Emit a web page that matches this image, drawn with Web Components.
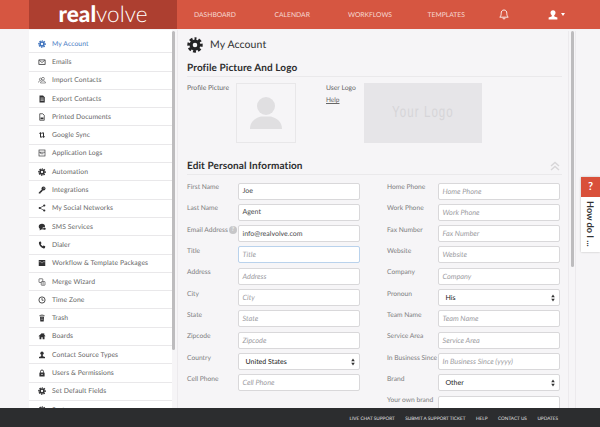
<!DOCTYPE html>
<html>
<head>
<meta charset="utf-8">
<title>My Account</title>
<style>
  html, body { margin: 0; height: 100%; overflow: hidden; background: #f6f5f7; }
  body { font-family: Lato, "Open Sans", sans-serif; color: #555; text-rendering: geometricPrecision; }
</style>
</head>
<body>
<rv-app>
  <rv-header slot="header"></rv-header>
  <rv-sidebar slot="sidebar"></rv-sidebar>
  <rv-account slot="main"></rv-account>
  <rv-footer slot="footer"></rv-footer>
</rv-app>
<rv-help-tab></rv-help-tab>

<script>
// Iconos del menú, todos en una caja de 16x16.
const GEAR = '<circle cx="8" cy="8" r="3.9" fill="none" stroke="currentColor" stroke-width="3.2"/><circle cx="8" cy="8" r="6.300" fill="none" stroke="currentColor" stroke-width="2.800" stroke-dasharray="2.950 2" stroke-dashoffset="1.475" transform="rotate(-90 8 8)"/>';
const ICONS = {
  gear: GEAR,
  mail: '<rect x="1" y="3" width="14" height="10.5" rx="1" fill="currentColor"/><rect x="2.6" y="4.6" width="10.8" height="7.3" fill="#fff"/><path d="M2.6 4.8 8 9l5.4-4.2" fill="none" stroke="currentColor" stroke-width="1.4"/>',
  users: '<g fill="none" stroke="currentColor" stroke-width="1"><circle cx="10" cy="5.5" r="2.8"/><path d="M5 14c0-3 2-4.2 5-4.2s5 1.2 5 4.2z"/><circle cx="5" cy="6.5" r="2.2"/><path d="M1 13c0-2.4 1.4-3.4 3.6-3.4"/></g>',
  exportDoc: '<path d="M3 1h7l3.5 3.5V15H3z" fill="currentColor"/><path d="M5 6h6.5M5 8.500h6.500M5 11h6.500" stroke="#fff" stroke-width="1.100"/>',
  printDoc: '<path d="M3.500 1.500h6l3 3v10h-9z" fill="none" stroke="currentColor" stroke-width="1.500"/><path d="M5 9h6v3.500H5z" fill="currentColor"/>',
  sync: '<path d="M4 13V5.500H1.800L4.800 2l3 3.500H6V11h2.500v2zM12 3v7.500h2.200l-3 3.500-3-3.500H10V5H7.500V3z" fill="currentColor"/>',
  logs: '<rect x="2" y="2" width="12" height="12" fill="none" stroke="currentColor" stroke-width="1.300"/><path d="M2 6.500h12M6 9.500h5M5 6.500v3" fill="none" stroke="currentColor" stroke-width="1.200"/>',
  key: '<circle cx="11" cy="5" r="4" fill="currentColor"/><circle cx="12" cy="4" r="1" fill="#fff"/><path d="M8.500 6 1.500 13v2h3l1-1.200V12.500h1.500l3-4z" fill="currentColor"/>',
  share: '<path d="M12.500 3 3.500 8l9 5" fill="none" stroke="currentColor" stroke-width="1.300"/><circle cx="12.500" cy="3" r="2.200" fill="currentColor"/><circle cx="3.500" cy="8" r="2.200" fill="currentColor"/><circle cx="12.500" cy="13" r="2.200" fill="currentColor"/>',
  sms: '<path d="M8 1.500c3.700 0 6 2.200 6 4.800 0 .7-.2 1.400-.5 2H9.500v4.500H6.200L3.500 15V11.200C2 10.200 1.500 8.300 1.500 6.300 1.500 3.700 4.300 1.500 8 1.500z" fill="currentColor"/><rect x="10.500" y="9.500" width="4.500" height="4" rx="1" fill="currentColor"/>',
  phone: '<path d="M3 1.500 5.500 1l1.500 3.500-1.500 1.500c.6 1.700 2.300 3.600 4 4.300L11 8.800l3.500 1.700-.5 2.800c-.3 1-1.300 1.700-2.500 1.500C6.700 14 2.300 9.400 1.800 4.500 1.700 3 2 2 3 1.500z" fill="currentColor"/>',
  box: '<rect x="1.500" y="2" width="13" height="12" fill="currentColor"/><path d="M1.500 5.500h4.500l1 2h2l1-2h4.500" fill="none" stroke="#fff" stroke-width=".8"/>',
  merge: '<rect x="2" y="1.500" width="7.500" height="7.500" rx="1" fill="none" stroke="currentColor" stroke-width="1.200"/><rect x="6.500" y="7" width="7.500" height="7.500" rx="1" fill="#fff" stroke="currentColor" stroke-width="1.200"/><path d="M8.500 9.500h3.500M8.500 12h3.500" stroke="currentColor"/>',
  clock: '<circle cx="8" cy="8" r="6.200" fill="none" stroke="currentColor" stroke-width="1.700"/><path d="M8 4.200V8.500H11.200" fill="none" stroke="currentColor" stroke-width="1.500"/>',
  trash: '<path d="M3 2.500h10v2H3z" fill="currentColor"/><path d="M4 5.500h8l-.6 9.500H4.600z" fill="currentColor"/><path d="M5.500 1h5v1.500h-5zM5.500 8h5M5.500 11h5" fill="currentColor" stroke="#fff" stroke-width=".7"/>',
  home: '<path d="M8 2 .8 8.500h2.200V14.500h3.700V10.500h2.600v4h3.700V8.500h2.200L12.500 5.600V2.500h-2v1.400z" fill="currentColor"/>',
  contact: '<circle cx="8" cy="4.500" r="3.300" fill="currentColor"/><path d="M6.500 7h3l.3 3.500 4.200 1.500v2.500H2V12l4.200-1.500z" fill="currentColor"/>',
  lock: '<path d="M5 7.500V5a3 3 0 0 1 6 0v2.500" fill="none" stroke="currentColor" stroke-width="1.800"/><rect x="2.800" y="7" width="10.400" height="8" rx="1" fill="currentColor"/><circle cx="8" cy="10.800" r="1.200" fill="#fff"/>'
};
const svgIcon = (name, size) => `<svg width="${size}" height="${size}" viewBox="0 0 16 16" aria-hidden="true">${ICONS[name]}</svg>`;

// Marco de la página: cabecera, menú, contenido y pie.
class RvApp extends HTMLElement {
  constructor() {
    super();
    this.attachShadow({ mode: 'open' });
    this.shadowRoot.innerHTML = `
      <style>
        :host { display: flex; flex-direction: column; height: 427px; overflow: hidden; }
        .body { flex: 1; min-height: 0; display: flex; padding-left: 29px; overflow: hidden; }
      </style>
      <slot name="header"></slot>
      <div class="body">
        <slot name="sidebar"></slot>
        <slot name="main"></slot>
      </div>
      <slot name="footer"></slot>`;
  }
}

class RvHeader extends HTMLElement {
  constructor() {
    super();
    this.attachShadow({ mode: 'open' });
    this.shadowRoot.innerHTML = `
      <style>
        :host { display: flex; height: 29px; background: #d65641; color: #f7d9d3; border-bottom: 1px solid #f3f2f4; font-family: Lato, sans-serif; }
        .logo { width: 148px; margin-left: 29px; background: #ad3f30; color: #fff; font-size: 22.500px; line-height: 28px; text-align: center; box-sizing: border-box; }
        .logo b { font-weight: 900; }
        .logo span { font-weight: 300; }
        nav { display: flex; align-items: center; font-size: 6.750px; padding-left: 17px; }
        a { display: block; }
        a:nth-child(1) { width: 80.500px; }
        a:nth-child(2) { width: 73.500px; }
        a:nth-child(3) { width: 79.500px; }
        a:nth-child(4) { width: 71.500px; }
        svg { display: block; color: #fff; }
        .bell { width: 49px; }
        .user { display: flex; align-items: center; gap: 3px; }
        .caret { width: 0; height: 0; border: 2.500px solid transparent; border-top: 3px solid #fff; border-bottom: 0; }
      </style>
      <div class="logo"><b>real</b><span>volve</span></div>
      <nav>
        <a>DASHBOARD</a><a>CALENDAR</a><a>WORKFLOWS</a><a>TEMPLATES</a>
        <div class="bell"><svg width="10" height="11" viewBox="0 0 10 11"><path d="M5 1c-2 0-2.800 1.500-2.800 3.300 0 2-.6 3-1.400 3.900h8.400c-.8-.9-1.400-1.900-1.400-3.900C7.800 2.500 7 1 5 1zM3.800 9c.1 1.300 2.300 1.300 2.400 0" fill="none" stroke="currentColor" stroke-width=".9"/></svg></div>
        <div class="user">
          <svg width="10" height="10" viewBox="0 0 16 16"><circle cx="8" cy="4.500" r="4" fill="currentColor"/><path d="M6.200 7h3.600l.4 3.500 4.800 1.600V15H1v-2.900l4.800-1.600z" fill="currentColor"/></svg>
          <span class="caret"></span>
        </div>
      </nav>`;
  }
}

// Una fila del menú lateral.
class RvNavItem extends HTMLElement {
  constructor() {
    super();
    this.attachShadow({ mode: 'open' });
  }
  connectedCallback() {
    const icon = this.getAttribute('icon');
    const active = this.hasAttribute('active');
    this.shadowRoot.innerHTML = `
      <style>
        :host { display: flex; align-items: center; box-sizing: border-box; height: 18.300px; padding-left: 9px; background: #fff; border-bottom: 1px solid #e9e8ea; color: ${active ? '#4a7cc4' : '#666'}; font-size: 6.800px; letter-spacing: .08px; flex: none; }
        svg { flex: none; color: ${active ? '#3f73bd' : '#303032'}; margin-right: 6px; display: block; }
      </style>
      ${svgIcon(icon, 8)}<slot></slot>`;
  }
}
customElements.define('rv-nav-item', RvNavItem);

class RvSidebar extends HTMLElement {
  constructor() {
    super();
    this.attachShadow({ mode: 'open' });
    const items = [
      ['gear', 'My Account'], ['mail', 'Emails'], ['users', 'Import Contacts'], ['exportDoc', 'Export Contacts'],
      ['printDoc', 'Printed Documents'], ['sync', 'Google Sync'], ['logs', 'Application Logs'], ['gear', 'Automation'],
      ['key', 'Integrations'], ['share', 'My Social Networks'], ['sms', 'SMS Services'], ['phone', 'Dialer'],
      ['box', 'Workflow & Template Packages'], ['merge', 'Merge Wizard'], ['clock', 'Time Zone'], ['trash', 'Trash'],
      ['home', 'Boards'], ['contact', 'Contact Source Types'], ['lock', 'Users & Permissions'], ['gear', 'Set Default Fields'],
      ['gear', 'System']
    ];
    const rows = items.map(([icon, text], i) =>
      `<rv-nav-item icon="${icon}"${i === 0 ? ' active' : ''}>${text.replace('&', '&amp;')}</rv-nav-item>`).join('');
    this.shadowRoot.innerHTML = `
      <style>
        :host { display: flex; flex: none; width: 149px; height: 100%; overflow: hidden; border-right: 1px solid #eceaed; box-sizing: border-box; }
        .list { width: 143px; padding-top: 5px; background: #fff; display: flex; flex-direction: column; overflow: hidden; }
        .track { width: 5px; background: #f6f5f7; }
        .thumb { width: 3px; height: 319px; margin: 1px 0 0 0; border-radius: 2px; background: #bdbcbe; }
      </style>
      <div class="list">${rows}</div>
      <div class="track"><div class="thumb"></div></div>`;
  }
}

// Etiqueta más caja de texto o desplegable.
class RvField extends HTMLElement {
  constructor() {
    super();
    this.attachShadow({ mode: 'open' });
  }
  connectedCallback() {
    const label = this.getAttribute('label');
    const value = this.getAttribute('value');
    const ph = this.getAttribute('placeholder') ?? label;
    const select = this.hasAttribute('select');
    const focus = this.hasAttribute('focus');
    const info = this.hasAttribute('info');
    this.shadowRoot.innerHTML = `
      <style>
        :host { display: flex; height: 21.330px; font-size: 6.700px; color: #7d7d80; }
        .label { width: 51px; flex: none; padding-top: .5px; white-space: nowrap; box-sizing: border-box; display: flex; gap: 1px; }
        .info { width: 8px; height: 8px; border-radius: 50%; background: #c6c6c8; color: #fff; font-size: 6px; line-height: 8px; text-align: center; }
        .box { width: 122px; height: 17px; box-sizing: border-box; background: #fff; border: 1px solid #d9d8da; border-bottom-width: 1.500px; border-radius: 2px; padding-left: 3.500px; padding-right: 4px; display: flex; align-items: center; justify-content: space-between; overflow: hidden; white-space: nowrap; font-size: 7px; }
        .box.focus { border: 1px solid #b9d2ec; }
        .ph { color: #9c9c9f; font-style: italic; font-size: 7.300px; }
        .val { color: #4a4a4c; }
        .sel { color: #222; padding-left: 3px; }
        .arrows { display: block; flex: none; }
      </style>
      <div class="label">${label}${info ? '<span class="info">?</span>' : ''}</div>
      <div class="box${focus ? ' focus' : ''}">
        ${select
          ? `<span class="sel">${value}</span><svg class="arrows" width="4" height="8" viewBox="0 0 4 8"><path d="M2 .5 3.800 3.300H.2zM2 7.500 .2 4.700h3.600z" fill="#333"/></svg>`
          : value ? `<span class="val">${value}</span>` : `<span class="ph">${ph}</span>`}
      </div>`;
  }
}
customElements.define('rv-field', RvField);

class RvAccount extends HTMLElement {
  constructor() {
    super();
    this.attachShadow({ mode: 'open' });
    this.shadowRoot.innerHTML = `
      <style>
        :host { display: flex; flex: 1; min-width: 0; height: 100%; overflow: hidden; font-family: Lato, sans-serif; }
        .content { width: 390px; flex: none; padding: 7px 6px 0 9px; box-sizing: border-box; }
        .title { display: flex; align-items: center; gap: 7px; height: 16px; font-size: 10.500px; color: #333; letter-spacing: .1px; }
        .title svg { color: #232325; display: block; }
        h2 { margin: 0; font-size: 10px; font-weight: 700; color: #2d2d2f; letter-spacing: .1px; line-height: 13px; height: 14px; border-bottom: 1px solid #eae9eb; position: relative; }
        .h1 { margin-top: 9px; }
        .pics { display: flex; height: 61px; margin-top: 6px; font-size: 6.800px; color: #666; }
        .pl { width: 49px; flex: none; padding-top: 1px; }
        .pic { width: 60px; height: 60px; box-sizing: border-box; border: 1px solid #e8e7e9; background: #f6f5f7; display: flex; align-items: center; justify-content: center; flex: none; }
        .pic svg { display: block; color: #e0dfe1; }
        .ul { margin-left: 30px; width: 38px; flex: none; padding-top: 1px; }
        .ul u { display: block; margin-top: 5px; font-size: 6.500px; }
        .logo { width: 118px; height: 60px; background: #e6e5e8; color: #d6d5d8; display: flex; align-items: center; justify-content: center; font-size: 16px; letter-spacing: 1.500px; font-family: "Liberation Sans", sans-serif; }
        .logo span { display: inline-block; transform: scaleX(.72); white-space: nowrap; }
        .h2 { margin-top: 16px; }
        .up { position: absolute; right: 2px; top: 1px; display: block; color: #d7d6d8; }
        .form { display: flex; margin-top: 7.500px; }
        .col { width: 200px; flex: none; display: flex; flex-direction: column; }
        .bar { width: 3px; height: 236px; margin-left: 0; background: #bdbcbe; border-radius: 2px; flex: none; }
        .track { width: 6px; border-left: 1px solid #eceaed; border-right: 1px solid #eceaed; display: flex; justify-content: center; flex: none; margin-top: 1px; }
      </style>
      <div class="content">
        <div class="title">${svgIcon('gear', 16)}My Account</div>
        <h2 class="h1">Profile Picture And Logo</h2>
        <div class="pics">
          <div class="pl">Profile Picture</div>
          <div class="pic"><svg width="34" height="34" viewBox="0 0 34 34"><circle cx="17" cy="10" r="9" fill="currentColor"/><path d="M1 33c0-8 6-11 11-12.500h10C27 22 33 25 33 33z" fill="currentColor"/></svg></div>
          <div class="ul">User Logo<u>Help</u></div>
          <div class="logo"><span>Your Logo</span></div>
        </div>
        <h2 class="h2">Edit Personal Information
          <svg class="up" width="10" height="10" viewBox="0 0 10 10"><path d="M1 5 5 1.500 9 5M1 9 5 5.500 9 9" fill="none" stroke="currentColor" stroke-width="1.400"/></svg>
        </h2>
        <div class="form">
          <div class="col">
            <rv-field label="First Name" value="Joe"></rv-field>
            <rv-field label="Last Name" value="Agent"></rv-field>
            <rv-field label="Email Address" value="info@realvolve.com" info></rv-field>
            <rv-field label="Title" focus></rv-field>
            <rv-field label="Address"></rv-field>
            <rv-field label="City"></rv-field>
            <rv-field label="State"></rv-field>
            <rv-field label="Zipcode"></rv-field>
            <rv-field label="Country" value="United States" select></rv-field>
            <rv-field label="Cell Phone"></rv-field>
          </div>
          <div class="col">
            <rv-field label="Home Phone"></rv-field>
            <rv-field label="Work Phone"></rv-field>
            <rv-field label="Fax Number"></rv-field>
            <rv-field label="Website"></rv-field>
            <rv-field label="Company"></rv-field>
            <rv-field label="Pronoun" value="His" select></rv-field>
            <rv-field label="Team Name"></rv-field>
            <rv-field label="Service Area"></rv-field>
            <rv-field label="In Business Since" placeholder="In Business Since (yyyy)"></rv-field>
            <rv-field label="Brand" value="Other" select></rv-field>
            <rv-field label="Your own brand" placeholder=" "></rv-field>
          </div>
        </div>
      </div>
      <div class="track"><div class="bar"></div></div>`;
  }
}

class RvFooter extends HTMLElement {
  constructor() {
    super();
    this.attachShadow({ mode: 'open' });
    this.shadowRoot.innerHTML = `
      <style>
        :host { display: flex; flex: none; height: 19px; background: #2c2d2f; color: #e4e4e5; font-size: 4.700px; align-items: center; justify-content: flex-end; gap: 10.500px; padding-right: 42px; position: relative; font-family: Lato, sans-serif; }
      </style>
      <span>LIVE CHAT SUPPORT</span><span>SUBMIT A SUPPORT TICKET</span><span>HELP</span><span>CONTACT US</span><span>UPDATES</span>`;
  }
}

// Pestaña flotante sobre el borde derecho.
class RvHelpTab extends HTMLElement {
  constructor() {
    super();
    this.attachShadow({ mode: 'open' });
    this.shadowRoot.innerHTML = `
      <style>
        :host { position: absolute; left: 581px; top: 177px; width: 19px; height: 75px; background: #fff; box-shadow: 0 0 2px #bbb; font-family: Lato, sans-serif; }
        .q { height: 20px; background: #d9503a; color: #fff; font-weight: 700; font-size: 11px; line-height: 20px; text-align: center; }
        .t { writing-mode: vertical-rl; color: #333; font-size: 9.200px; font-weight: 700; line-height: 19px; padding-top: 4px; white-space: nowrap; }
      </style>
      <div class="q">?</div>
      <div class="t">How do I ...</div>`;
  }
}

customElements.define('rv-app', RvApp);
customElements.define('rv-header', RvHeader);
customElements.define('rv-sidebar', RvSidebar);
customElements.define('rv-account', RvAccount);
customElements.define('rv-footer', RvFooter);
customElements.define('rv-help-tab', RvHelpTab);
</script>
</body>
</html>
